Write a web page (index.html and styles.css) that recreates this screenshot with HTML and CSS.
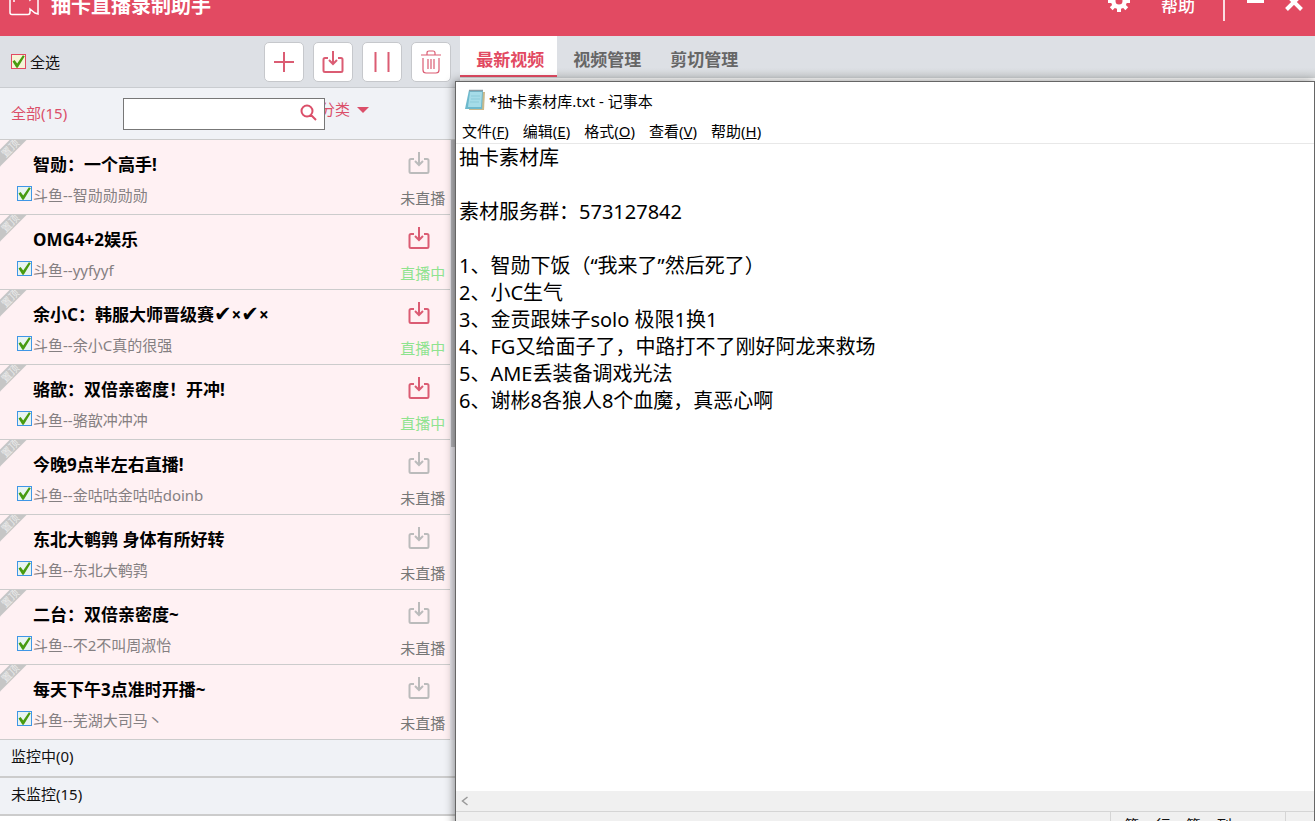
FILE: index.html
```html
<!DOCTYPE html>
<html lang="zh-CN">
<head>
<meta charset="utf-8">
<title>抽卡直播录制助手</title>
<link rel="stylesheet" href="styles.css">
</head>
<body>
<svg class="defs" aria-hidden="true">
  <symbol id="i-save" viewBox="0 0 22 22"><path d="M6 7H3q-1.500 0-1.500 1.500v11q0 1.500 1.500 1.500h16q1.500 0 1.500-1.500v-11Q20.500 7 19 7h-3M11 0v13M7 9l4 4 4-4" fill="none" stroke="currentColor" stroke-width="2"/></symbol>
</svg>
<div class="app">
  <header class="titlebar">
    <svg class="logo" viewBox="0 0 32 24"><path d="M3 1h16q2 0 2 2v5l8-6v20l-3-1-5-4v3q0 2.500-2 2.500H3q-2 0-2-2V3q0-2 2-2zM5 6v4" fill="none" stroke="currentColor" stroke-width="1.500"/></svg>
    <h1 class="title">抽卡直播录制助手</h1>
    <button class="bar-btn gear" aria-label="设置"><svg width="22" height="22" viewBox="0 0 22 22"><g fill="currentColor"><path fill-rule="evenodd" d="M11 3a8 8 0 1 0 0 16 8 8 0 0 0 0-16zm0 4.500a3.500 3.500 0 1 1 0 7 3.500 3.500 0 0 1 0-7z"/><path d="M9 0h4v4H9zM9 18h4v4H9zM0 9h4v4H0zM18 9h4v4h-4z"/><path d="M9 0h4v4H9zM9 18h4v4H9zM0 9h4v4H0zM18 9h4v4h-4z" transform="rotate(45 11 11)"/></g></svg></button>
    <button class="bar-btn help">帮助</button>
    <span class="divider"></span>
    <button class="bar-btn minimize" aria-label="最小化"><svg width="18" height="20" viewBox="0 0 18 20"><path d="M0 5h17" stroke="currentColor" stroke-width="4"/></svg></button>
    <button class="bar-btn close" aria-label="关闭"><svg width="18" height="18" viewBox="0 0 18 18"><path d="M1.500 1.500l15 15M16.500 1.500l-15 15" stroke="currentColor" stroke-width="4"/></svg></button>
  </header>
  <div class="main">
    <aside class="sidebar">
      <div class="toolbar">
        <label class="select-all"><input class="check check-red" type="checkbox" checked>全选</label>
        <button class="tool" aria-label="添加"><svg width="22" height="22" viewBox="0 0 22 22"><path d="M11 1v20M1 11h20" stroke="currentColor" stroke-width="2"/></svg></button>
        <button class="tool" aria-label="录制"><svg width="22" height="22"><use href="#i-save"/></svg></button>
        <button class="tool" aria-label="暂停"><svg width="22" height="22" viewBox="0 0 22 22"><path d="M4.500 1v20M17.500 1v20" stroke="currentColor" stroke-width="2"/></svg></button>
        <button class="tool" aria-label="删除"><svg width="22" height="24" viewBox="0 0 22 24"><path d="M1 5h20M7 5V3q0-2 2-2h4q2 0 2 2v2M3 8v12q0 3 3 3h10q3 0 3-3V8M8 9v10M11 9v10M14 9v10" fill="none" stroke="currentColor" stroke-width="1.200"/></svg></button>
      </div>
      <div class="filter">
        <span class="filter-all">全部(15)</span>
        <div class="search">
          <input class="search-input" type="text" aria-label="搜索">
          <svg class="search-icon" width="17" height="17" viewBox="0 0 17 17"><path d="M7 1.500a5.500 5.500 0 1 0 0 11 5.500 5.500 0 0 0 0-11zM11 11l5 5" fill="none" stroke="currentColor" stroke-width="2"/></svg>
        </div>
        <button class="category">分类<span class="caret"></span></button>
      </div>
      <ul class="rooms">
        <li class="room"><span class="ribbon">置顶</span><div class="room-info"><h2 class="room-title">智勋：一个高手!</h2><label class="room-name"><input class="check" type="checkbox" checked>斗鱼--智勋勋勋勋</label></div><div class="room-state"><svg width="22" height="22"><use href="#i-save"/></svg><span class="state-text">未直播</span></div></li>
        <li class="room live"><span class="ribbon">置顶</span><div class="room-info"><h2 class="room-title">OMG4+2娱乐</h2><label class="room-name"><input class="check" type="checkbox" checked>斗鱼--yyfyyf</label></div><div class="room-state"><svg width="22" height="22"><use href="#i-save"/></svg><span class="state-text">直播中</span></div></li>
        <li class="room live"><span class="ribbon">置顶</span><div class="room-info"><h2 class="room-title">余小C：韩服大师晋级赛<span class="tick">✔</span>×<span class="tick">✔</span>×</h2><label class="room-name"><input class="check" type="checkbox" checked>斗鱼--余小C真的很强</label></div><div class="room-state"><svg width="22" height="22"><use href="#i-save"/></svg><span class="state-text">直播中</span></div></li>
        <li class="room live"><span class="ribbon">置顶</span><div class="room-info"><h2 class="room-title">骆歆：双倍亲密度！开冲!</h2><label class="room-name"><input class="check" type="checkbox" checked>斗鱼--骆歆冲冲冲</label></div><div class="room-state"><svg width="22" height="22"><use href="#i-save"/></svg><span class="state-text">直播中</span></div></li>
        <li class="room"><span class="ribbon">置顶</span><div class="room-info"><h2 class="room-title">今晚9点半左右直播!</h2><label class="room-name"><input class="check" type="checkbox" checked>斗鱼--金咕咕金咕咕doinb</label></div><div class="room-state"><svg width="22" height="22"><use href="#i-save"/></svg><span class="state-text">未直播</span></div></li>
        <li class="room"><span class="ribbon">置顶</span><div class="room-info"><h2 class="room-title">东北大鹌鹑 身体有所好转</h2><label class="room-name"><input class="check" type="checkbox" checked>斗鱼--东北大鹌鹑</label></div><div class="room-state"><svg width="22" height="22"><use href="#i-save"/></svg><span class="state-text">未直播</span></div></li>
        <li class="room"><span class="ribbon">置顶</span><div class="room-info"><h2 class="room-title">二台：双倍亲密度~</h2><label class="room-name"><input class="check" type="checkbox" checked>斗鱼--不2不叫周淑怡</label></div><div class="room-state"><svg width="22" height="22"><use href="#i-save"/></svg><span class="state-text">未直播</span></div></li>
        <li class="room"><span class="ribbon">置顶</span><div class="room-info"><h2 class="room-title">每天下午3点准时开播~</h2><label class="room-name"><input class="check" type="checkbox" checked>斗鱼--芜湖大司马丶</label></div><div class="room-state"><svg width="22" height="22"><use href="#i-save"/></svg><span class="state-text">未直播</span></div></li>
      </ul>
      <div class="group">监控中(0)</div>
      <div class="group">未监控(15)</div>
    </aside>
    <section class="content">
      <nav class="tabs">
        <button class="tab active">最新视频</button>
        <button class="tab">视频管理</button>
        <button class="tab">剪切管理</button>
      </nav>
    </section>
  </div>
  <section class="notepad">
    <div class="np-title">
      <svg width="20" height="22" viewBox="0 0 20 22"><path d="M5 3h15l-1 18H4z" fill="#c9b98c"/><path d="M4 1h14l-1 19H0z" fill="#6db9cd"/><path d="M5 3h12l-1 15H3z" fill="#a5dce8"/><path d="M6 7h9M6 10h9M5 13h9" stroke="#8ccbd9"/><path d="M4 1.500h14" stroke="#8a9ba3" stroke-width="1.500"/></svg>
      <span>*抽卡素材库.txt - 记事本</span>
    </div>
    <nav class="np-menu">
      <button class="np-item">文件(<u>F</u>)</button>
      <button class="np-item">编辑(<u>E</u>)</button>
      <button class="np-item">格式(<u>O</u>)</button>
      <button class="np-item">查看(<u>V</u>)</button>
      <button class="np-item">帮助(<u>H</u>)</button>
    </nav>
    <textarea class="np-text" aria-label="文本编辑器" spellcheck="false">抽卡素材库

素材服务群：573127842

1、智勋下饭（“我来了”然后死了）
2、小C生气
3、金贡跟妹子solo 极限1换1
4、FG又给面子了，中路打不了刚好阿龙来救场
5、AME丢装备调戏光法
6、谢彬8各狼人8个血魔，真恶心啊</textarea>
    <div class="np-scroll"><svg width="8" height="10" viewBox="0 0 8 10"><path d="M6.500 1l-5 4 5 4" fill="none" stroke="#999" stroke-width="1.500"/></svg></div>
    <div class="np-status"><span class="np-pos">第 1 行，第 1 列</span></div>
  </section>
</div>
</body>
</html>
```
FILE: styles.css
```css
* { box-sizing: border-box; }
body {
  margin: 0;
  font-family: "Noto Sans", "Noto Sans CJK SC", "DejaVu Sans", sans-serif;
  font-size: 15px;
  color: #111;
  overflow: hidden;
}
button { font: inherit; color: inherit; background: none; border: 0; padding: 0; }
.defs { display: none; }
svg { display: block; flex: none; }
.app { position: relative; height: 100vh; display: flex; flex-direction: column; overflow: hidden; background: #fff; }

.titlebar {
  flex: none;
  display: flex;
  align-items: center;
  height: 60px;
  margin-top: -24px;
  padding: 0 12px 0 9px;
  background: #e24a62;
  color: #fff;
}
.logo { width: 32px; height: 24px; margin: 0 10px 4px 0; }
.title { flex: 1; margin: 0; font-size: 20px; line-height: 28px; font-weight: 700; }
.bar-btn { display: flex; }
.gear { margin: 0 31px 10px 0; }
.help { font-size: 17px; line-height: 24px; font-weight: 500; }
.divider { width: 2px; height: 30px; margin: 0 22px 0 28px; background: #fbdde2; }
.minimize { margin-right: 20px; }
.close { margin-bottom: 8px; }

.main { flex: 1; min-height: 0; display: grid; grid-template-columns: 35% 1fr; }
.sidebar { display: flex; flex-direction: column; min-width: 0; }
.toolbar {
  display: flex;
  align-items: center;
  gap: 9px;
  height: 52px;
  padding: 0 9px 0 11px;
  background: #dde0e5;
  border-bottom: 1px solid #c9ccd0;
}
.select-all { display: flex; align-items: center; gap: 4px; margin-right: auto; }
.check {
  appearance: none;
  position: relative;
  flex: none;
  width: 15px;
  height: 15px;
  margin: 0;
  border: 1px solid #3f96e6;
  background: #e8f4f0;
}
.check-red { border-color: #e24a62; background: #f5f5d8; }
.check:checked::before {
  content: "";
  position: absolute;
  inset: 0;
  background: #489b10;
  clip-path: polygon(4% 50%, 20% 38%, 40% 66%, 84% 2%, 98% 10%, 44% 98%, 34% 98%);
}
.tool {
  display: grid;
  place-items: center;
  width: 40px;
  height: 40px;
  border: 1px solid #c6c8cc;
  border-radius: 5px;
  background: #fff;
  color: #db5c73;
}
.filter {
  display: flex;
  height: 52px;
  padding: 10px 11px 0;
  background: #f0f2f6;
  border-bottom: 1px solid #ccc;
  color: #db4f69;
}
.filter-all { width: 112px; line-height: 30px; }
.search { position: relative; z-index: 1; width: 202px; height: 32px; }
.search-input { width: 100%; height: 100%; padding: 0 30px 0 6px; border: 1px solid #777; background: #fff; font: inherit; }
.search-icon { position: absolute; right: 8px; top: 6px; }
.category { display: flex; align-items: center; gap: 7px; height: 20px; margin-left: -5px; }
.caret { border: 6px solid transparent; border-top-color: currentColor; border-bottom: 0; margin-top: 4px; }

.rooms { margin: 0; padding: 0 10px 0 0; list-style: none; background: linear-gradient(#b9b9bd, #b9b9bd) 451px 0 / 5px 307px no-repeat #eceaf0; }
.room {
  position: relative;
  display: flex;
  justify-content: space-between;
  height: 75px;
  padding: 12px 5px 0 17px;
  overflow: hidden;
  background: #fff1f3;
  border-bottom: 1px solid #ccc;
}
.ribbon {
  position: absolute;
  left: -30px;
  top: 2px;
  width: 80px;
  height: 12px;
  line-height: 12px;
  font-size: 10px;
  text-align: center;
  color: #ececec;
  background: #c6c6c6;
  transform: rotate(-45deg);
}
.room-title { margin: 0 0 4px 16px; font-size: 17px; line-height: 26px; font-weight: 700; color: #000; white-space: nowrap; }
.tick { font-family: "DejaVu Sans", sans-serif; font-size: 21px; line-height: 20px; font-style: italic; }
.room-name { display: flex; align-items: center; gap: 1px; line-height: 26px; color: #858082; white-space: nowrap; }
.room-name .check { margin-bottom: 3px; }
.room-state { display: flex; flex-direction: column; gap: 12px; color: #bbb; }
.room-state svg { margin-left: 8px; }
.state-text { color: #777; line-height: 24px; }
.live .room-state { color: #db5c73; }
.live .state-text { color: #8fe38f; }
.group { height: 38px; padding-left: 11px; line-height: 33px; background: #f0f2f6; border-bottom: 2px solid #ccc; }

.content { min-width: 0; }
.tabs { display: flex; height: 42px; background: linear-gradient(#dde0e5 75%, #cfd2d4); }
.tab { width: 97px; height: 41px; padding: 5px 0 0 3px; font-size: 17px; font-weight: 700; color: #666; border-bottom: 2px solid transparent; }
.tab.active { background: #fff; color: #e24a62; border-bottom-color: #e24a62; }

.notepad {
  position: absolute;
  left: 455px;
  right: 0;
  top: 81px;
  bottom: -12px;
  display: flex;
  flex-direction: column;
  background: #fff;
  border: 1px solid #666;
  box-shadow: -1px 0 9px rgba(0, 0, 0, 0.45);
}
.np-title { display: flex; align-items: center; gap: 4px; height: 36px; padding-left: 9px; color: #000; }
.np-menu { display: flex; gap: 14px; height: 26px; padding-left: 6px; border-bottom: 1px solid #e8e8e8; color: #000; line-height: 26px; }
.np-text {
  flex: 1;
  min-height: 0;
  width: 100%;
  margin: 0;
  padding: 0 3px;
  border: 0;
  outline: 0;
  resize: none;
  overflow: hidden;
  background: #fff;
  font: inherit;
  font-size: 20px;
  line-height: 27px;
  color: #000;
}
.np-scroll { display: flex; align-items: center; height: 20px; padding-left: 5px; background: #f0f0f0; }
.np-status { display: flex; justify-content: flex-end; height: 21px; border-top: 1px solid #d5d5d5; background: #f0f0f0; padding-right: 28px; }
.np-pos { width: 176px; padding-left: 13px; border: solid #d5d5d5; border-width: 0 1px; font-size: 15px; line-height: 26px; }
```
